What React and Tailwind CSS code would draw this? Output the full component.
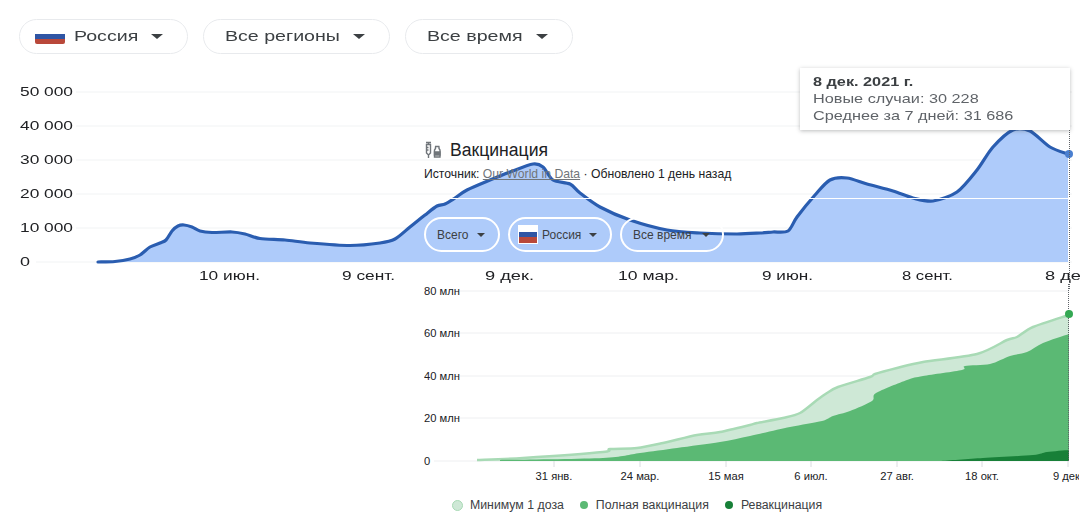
const casesCurve = [
  [98, 262], [115, 261.5], [130, 259], [140, 255], [150, 247], [160, 243], [166, 240], [172, 231], [178, 226], [184, 225],
  [192, 227], [200, 231], [212, 232.5], [232, 232], [245, 234], [260, 238.5], [285, 240], [310, 243], [350, 245.5], [380, 243],
  [395, 239], [410, 227], [425, 215], [437, 206], [445, 204], [455, 198], [467, 190], [490, 180], [510, 172], [533, 164],
  [543, 167], [553, 180], [570, 184], [580, 193], [600, 207], [630, 220], [667, 230], [700, 233], [737, 234], [760, 233],
  [773, 232], [788, 231], [797, 217], [815, 195], [830, 180], [847, 178], [867, 184], [893, 191], [913, 198], [933, 201],
  [957, 192], [977, 170], [993, 147], [1013, 130], [1030, 131], [1050, 147], [1068, 154],
]

const firstDose = [
  [477, 460], [523, 458], [603, 452], [610, 449], [637, 448], [663, 443], [697, 435], [720, 432], [750, 425], [757, 423],
  [783, 418], [800, 413], [817, 400], [827, 393], [838, 387], [870, 377], [875, 374], [897, 368], [923, 362], [977, 354],
  [1007, 340], [1017, 337], [1033, 327], [1069, 315],
]

const fullDose = [
  [500, 460], [603, 458], [640, 453], [677, 448], [720, 442], [750, 436], [790, 427], [822, 421], [833, 416], [850, 411],
  [872, 401], [876, 393], [907, 380], [923, 376], [962, 370], [965, 366], [990, 364], [1010, 356], [1027, 352], [1043, 343],
  [1069, 334],
]

const booster = [[940, 461], [983, 458], [1033, 455], [1047, 452], [1069, 450]]

// catmull-rom through the sampled points, so the curves don't look faceted
const toCurve = (pts) => {
  let d = `M${pts[0][0]} ${pts[0][1]}`
  for (let i = 0; i < pts.length - 1; i++) {
    const p0 = pts[i - 1] || pts[i]
    const p1 = pts[i]
    const p2 = pts[i + 1]
    const p3 = pts[i + 2] || p2
    const c1x = p1[0] + (p2[0] - p0[0]) / 7
    const c1y = p1[1] + (p2[1] - p0[1]) / 7
    const c2x = p2[0] - (p3[0] - p1[0]) / 7
    const c2y = p2[1] - (p3[1] - p1[1]) / 7
    d += ` C${c1x} ${c1y} ${c2x} ${c2y} ${p2[0]} ${p2[1]}`
  }
  return d
}
const toArea = (pts, base) => `${toCurve(pts)} L${pts[pts.length - 1][0]} ${base} L${pts[0][0]} ${base} Z`

const casesY = [
  ["50 000", 92],
  ["40 000", 126],
  ["30 000", 160],
  ["20 000", 194],
  ["10 000", 228],
]

const casesX = [
  ["10 июн.", 199, 61],
  ["9 сент.", 342, 53],
  ["9 дек.", 485, 49],
  ["10 мар.", 618, 61],
  ["9 июн.", 762, 51],
  ["8 сент.", 902, 51],
  ["8 дек.", 1045, 49],
]

const vaccY = [
  ["80 млн", 291],
  ["60 млн", 333],
  ["40 млн", 376],
  ["20 млн", 418],
]

const vaccX = [
  ["31 янв.", 554],
  ["24 мар.", 640],
  ["15 мая", 726],
  ["6 июл.", 811],
  ["27 авг.", 897],
  ["18 окт.", 982],
  ["9 дек.", 1068],
]

function Flag({ className }) {
  return (
    <span className={`flex flex-col overflow-hidden ${className}`}>
      <span className="flex-1 bg-white" />
      <span className="flex-1 bg-[#2f55a4]" />
      <span className="flex-1 bg-[#b9483a]" />
    </span>
  )
}

function TopFilter({ width, textWidth, flag, children }) {
  return (
    <button className={`flex h-[35px] items-center rounded-full border border-[#e8eaed] pl-[15px] pr-[24px] ${width}`}>
      {flag && <Flag className="mr-[9px] h-[15px] w-[30px] rounded-[2px]" />}
      <span className={`origin-left scale-x-[1.4] whitespace-nowrap text-left text-[14px] text-[#3c4043] ${textWidth} ${flag ? "" : "ml-[6px]"}`}>
        {children}
      </span>
      <span className="ml-auto border-x-[6px] border-t-[5px] border-x-transparent border-t-[#3c4043]" />
    </button>
  )
}

function PanelFilter({ width, padding, children }) {
  return (
    <button className={`flex h-[35px] items-center rounded-full border-2 border-white text-[12px] text-[#3c4043] ${padding} ${width}`}>
      {children}
      <span className="ml-auto border-x-[4px] border-t-[4px] border-x-transparent border-t-[#3c4043]" />
    </button>
  )
}

function CasesChart() {
  return (
    <svg viewBox="0 70 1080 220" className="block h-[220px] w-[1080px]">
      {casesY.map(([label, y]) => (
        <line key={label} x1="76" x2="1072" y1={y} y2={y} stroke="#f1f3f4" />
      ))}
      <line x1="36" x2="1072" y1="262" y2="262" stroke="#f1f3f4" />
      <path d={toArea(casesCurve, 262)} fill="#aecbfa" />
      <path d={toCurve(casesCurve)} fill="none" stroke="#2a5db0" strokeWidth="3.2" strokeLinecap="round" />
      <circle cx="1069" cy="154" r="4" fill="#4a7fd0" />
      <g className="blur-[0.4px]" fontSize="13" fill="#202124">
        {casesY.map(([label, y]) => (
          <text key={label} x="20" y={y + 4} textLength="53" lengthAdjust="spacingAndGlyphs">{label}</text>
        ))}
        <text x="20" y="266" textLength="10" lengthAdjust="spacingAndGlyphs">0</text>
        {casesX.map(([label, x, w]) => (
          <text key={label} x={x} y="280" textLength={w} lengthAdjust="spacingAndGlyphs">{label}</text>
        ))}
      </g>
      <line x1="1069.5" x2="1069.5" y1="130" y2="290" stroke="#5f6368" strokeDasharray="1 1" />
    </svg>
  )
}

function VaccineChart() {
  return (
    <svg viewBox="424 284 655 206" className="mt-[32px] block h-[206px] w-[655px]">
      {vaccY.map(([label, y]) => (
        <g key={label}>
          <line x1="460" x2="1069" y1={y} y2={y} stroke="#eeeff1" />
          <text x="424" y={y + 4} fontSize="11.2" fill="#202124">{label}</text>
        </g>
      ))}
      <line x1="434" x2="1069" y1="461" y2="461" stroke="#eeeff1" />
      <text x="424" y="465" fontSize="11.2" fill="#202124">0</text>
      <path d={toArea(firstDose, 461)} fill="#cee8d6" />
      <path d={toCurve(firstDose)} fill="none" stroke="#a8dab5" strokeWidth="2.5" />
      <path d={toArea(fullDose, 461)} fill="#5bb974" />
      <path d={toArea(booster, 461)} fill="#188038" />
      {vaccX.map(([label, x]) => (
        <g key={label}>
          <line x1={x} x2={x} y1="461" y2="467" stroke="#dadce0" />
          <text x={x} y="480" textAnchor="middle" fontSize="11.2" fill="#202124">{label}</text>
        </g>
      ))}
      <line x1="1068.5" x2="1068.5" y1="284" y2="461" stroke="#5f6368" strokeDasharray="1 1" />
      <circle cx="1069" cy="314" r="4" fill="#34a853" />
    </svg>
  )
}

function VaccineIcon() {
  return (
    <svg viewBox="0 0 18 18" className="h-[18px] w-[18px]" fill="none" stroke="#70757a" strokeWidth="1.4">
      <path d="M2 1.5h5M4.5 1.5v2M2.5 3.5h4v8.5l-2 2-2-2zM4.5 14v3" />
      <path d="M2.5 6.5h2M2.5 9h2" />
      <path d="M11 5.5h4.5M11.5 5.5v2l-1 1.5v7h5.5V9l-1-1.5v-2" />
      <path d="M10.5 11h5.5v3h-5.5z" fill="#70757a" />
    </svg>
  )
}

export default function App() {
  return (
    <div className="relative h-[532px] w-[1088px] overflow-hidden bg-white font-['Liberation_Sans',sans-serif]">
      <div className="flex h-[70px] items-start gap-[15px] pl-[19px] pt-[19px] blur-[0.3px]">
        <TopFilter width="w-[169px]" textWidth="w-[46px]" flag>Россия</TopFilter>
        <TopFilter width="w-[187px]" textWidth="w-[82px]">Все регионы</TopFilter>
        <TopFilter width="w-[168px]" textWidth="w-[68px]">Все время</TopFilter>
      </div>

      <CasesChart />

      {/* tooltip of the cases chart */}
      <div className="absolute left-[800px] top-[68px] h-[62px] w-[270px] bg-white px-[13px] py-[5px] text-[13px] leading-[17px] text-[#5f6368] shadow-[0_1px_4px_rgba(60,64,67,0.35)]">
        <div className="origin-left scale-x-[1.25] whitespace-nowrap font-bold text-[#3c4043] blur-[0.3px]">8 дек. 2021 г.</div>
        <div className="origin-left scale-x-[1.25] whitespace-nowrap blur-[0.3px]">Новые случаи: 30 228</div>
        <div className="origin-left scale-x-[1.25] whitespace-nowrap blur-[0.3px]">Среднее за 7 дней: 31 686</div>
      </div>

      {/* vaccination card pasted over the chart */}
      <div className="absolute left-[424px] top-[140px] w-[664px]">
        <div className="flex h-[20px] items-center gap-[8px]">
          <VaccineIcon />
          <span className="text-[17.6px] text-[#202124]">Вакцинация</span>
        </div>
        <div className="mt-[6px] h-[16px] whitespace-nowrap text-[12.2px] leading-[16px] text-[#202124]">
          Источник: <span className="text-[#70757a] underline">Our World in Data</span> · Обновлено 1 день назад
        </div>
        <div className="mt-[16px] w-[648px] border-t border-white" />
        <div className="mt-[18px] flex gap-[8px]">
          <PanelFilter width="w-[76px]" padding="pl-[11px] pr-[13px]">Всего</PanelFilter>
          <PanelFilter width="w-[104px]" padding="pl-[8px] pr-[13px]">
            <Flag className="mr-[4px] h-[19px] w-[20px] border border-white" />
            Россия
          </PanelFilter>
          <PanelFilter width="w-[104px]" padding="pl-[11px] pr-[12px]">Все время</PanelFilter>
        </div>
        <VaccineChart />
        <div className="mt-[6px] flex items-center text-[12.3px] text-[#3c4043]">
          <span className="ml-[28px] h-[11px] w-[11px] rounded-full border border-[#a8dab5] bg-[#cee8d6]" />
          <span className="ml-[7px]">Минимум 1 доза</span>
          <span className="ml-[16px] h-[8px] w-[8px] rounded-full bg-[#5bb974]" />
          <span className="ml-[8px]">Полная вакцинация</span>
          <span className="ml-[16px] h-[8px] w-[8px] rounded-full bg-[#188038]" />
          <span className="ml-[8px]">Ревакцинация</span>
        </div>
      </div>
    </div>
  )
}
